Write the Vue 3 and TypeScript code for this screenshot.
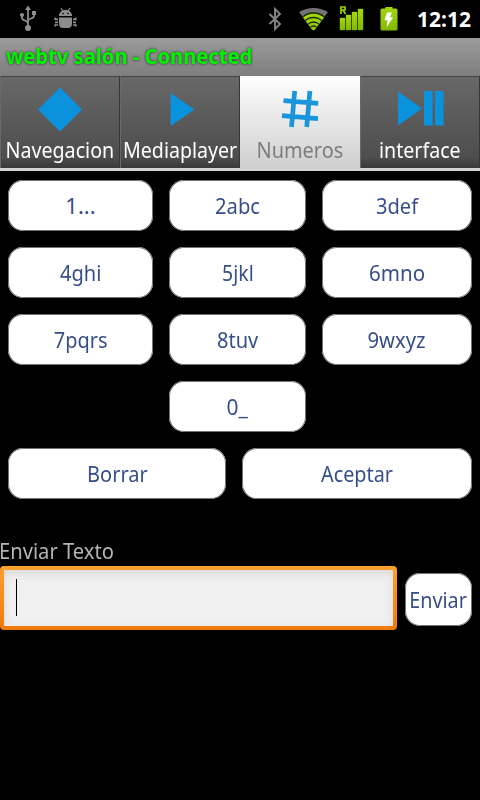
<script setup lang="ts">
interface Label {
  text: string
  width: number
}

interface Tab extends Label {
  icon: 'diamond' | 'play' | 'hash' | 'playpause'
  active?: boolean
}

const tabs: Tab[] = [
  { text: 'Navegacion', width: 109, icon: 'diamond' },
  { text: 'Mediaplayer', width: 114, icon: 'play' },
  { text: 'Numeros', width: 87, icon: 'hash', active: true },
  { text: 'interface', width: 82, icon: 'playpause' },
]

const keys: Label[] = [
  { text: '1...', width: 30 },
  { text: '2abc', width: 45 },
  { text: '3def', width: 42 },
  { text: '4ghi', width: 41 },
  { text: '5jkl', width: 32 },
  { text: '6mno', width: 56 },
  { text: '7pqrs', width: 53.5 },
  { text: '8tuv', width: 41 },
  { text: '9wxyz', width: 58 },
  { text: '0_', width: 21 },
]

// Condenses a label horizontally to the given advance width.
const vFit = {
  mounted(el: HTMLElement, binding: { value: number }) {
    el.style.transform = `scaleX(${binding.value / el.offsetWidth})`
  },
}
</script>

<template>
  <div class="screen">
    <header class="status">
      <svg class="status-icons" width="480" height="38" viewBox="0 0 480 38">
        <defs>
          <linearGradient id="lime" x1="0" y1="0" x2="0" y2="1">
            <stop offset="0" stop-color="#a5d613" />
            <stop offset="1" stop-color="#82b800" />
          </linearGradient>
          <clipPath id="wifi"><path d="M299 12Q313.500 4 328 12L315 29.500q-1.500 1.500-3 0z" /></clipPath>
        </defs>
        <g fill="none" stroke="#8d8d8d" stroke-width="1.800">
          <path d="M28 9V28M28 23.500C28 20 22 21 22 18V15M28 21C28 18 34 19 34 16V13" />
        </g>
        <g fill="#8d8d8d">
          <path d="M28 5.500l3 4.500h-6z" />
          <circle cx="28" cy="28" r="3" />
          <circle cx="22" cy="15" r="2.100" />
          <rect x="32" y="11" width="4" height="4" />
          <path d="M59 16a6.500 6.300 0 0 1 13 0zM59 17.500h13v6q0 4.500-4.500 4.500h-4q-4.500 0-4.500-4.500z" />
        </g>
        <path d="M61 8l2 3M70 8l-2 3" fill="none" stroke="#8d8d8d" stroke-width="1.300" />
        <path d="M55.200 17.500v1.800H58M75.800 17.500v1.800H73M55 22.300h3M76 22.300h-3M55.200 26.500v-1.500H58M75.800 26.500v-1.500H73" fill="none" stroke="#8d8d8d" stroke-width="1.700" />
        <circle cx="63" cy="13.500" r=".8" /><circle cx="68" cy="13.500" r=".8" />
        <path d="M269.500 14L280 24l-5 5V9l5 5-10.500 10" fill="none" stroke="#858585" stroke-width="1.900" />
        <g clip-path="url(#wifi)">
          <path d="M298 5h31v26h-31z" fill="#737373" />
          <circle cx="313.500" cy="30" r="16.500" fill="url(#lime)" />
          <g fill="none" stroke="#183000" stroke-width="1.300">
            <circle cx="313.500" cy="30" r="17" />
            <circle cx="313.500" cy="30" r="12.500" />
            <circle cx="313.500" cy="30" r="8" />
            <circle cx="313.500" cy="30" r="4" />
          </g>
        </g>
        <g class="signal" fill="url(#lime)">
          <rect x="340" y="18" width="5" height="12" />
          <rect x="346" y="15" width="5" height="15" />
          <rect x="352" y="12" width="5" height="18" />
          <rect x="358" y="9" width="5" height="21" />
        </g>
        <path d="M341 14V7h4v3h-4m2 0l2.500 4" fill="none" stroke="#9bd000" stroke-width="1.700" />
        <path d="M382 8.500h3.500V7h7v1.500H396q1.500 0 1.500 1.500v19q0 1.500-1.500 1.500h-14q-1.500 0-1.500-1.500V10q0-1.500 1.500-1.500z" fill="url(#lime)" />
        <path d="M387 12.500h5l-2 4.500 3 .5-6.500 10 1-7-3-.5z" fill="#fff" />
      </svg>
      <span v-fit="54" class="clock">12:12</span>
    </header>

    <div class="titlebar"><span v-fit="246" class="title">webtv salón - Connected</span></div>

    <nav class="tabs">
      <button v-for="tab in tabs" :key="tab.text" class="tab" :class="{ active: tab.active }">
        <svg class="tab-icon" width="60" height="60" viewBox="0 0 60 60">
          <path v-if="tab.icon === 'diamond'" d="M30 11.500L52 33.500 30 55.500 8 33.500z" fill="#0a92dc" />
          <path v-else-if="tab.icon === 'play'" d="M20.500 17L44.500 33.500 20.500 50z" fill="#0a92dc" />
          <path v-else-if="tab.icon === 'hash'" d="M24.700 15L21.500 51M39.900 15L36.700 51M13.500 24.600L48.200 27.300M12 39.700L48 42.600" fill="none" stroke="#1a95dc" stroke-width="4.700" />
          <path v-else d="M8 15.500L32 32.500 8 49.500zM34 15h8.500v34.500H34zM45 15h8.500v34.500H45z" fill="#0a92dc" />
        </svg>
        <span v-fit="tab.width" class="label">{{ tab.text }}</span>
      </button>
    </nav>

    <main>
      <div class="keypad">
        <button v-for="key in keys" :key="key.text" class="key" :class="{ zero: key.text === '0_' }">
          <span v-fit="key.width" class="label">{{ key.text }}</span>
        </button>
      </div>
      <div class="actions">
        <button class="key"><span v-fit="61" class="label">Borrar</span></button>
        <button class="key"><span v-fit="72" class="label">Aceptar</span></button>
      </div>
      <div class="caption"><span v-fit="114.500" class="label">Enviar Texto</span></div>
      <div class="send">
        <div class="field"><div class="inner"><i class="caret"></i></div></div>
        <button class="key submit"><span v-fit="57.500" class="label">Enviar</span></button>
      </div>
    </main>
  </div>
</template>

<style>
body {
  background: #000;
}
</style>

<style scoped>
.screen {
  width: 480px;
  height: 800px;
  overflow: hidden;
  background: #000;
  font-family: "Noto Sans", "Open Sans", sans-serif;
  font-size: 22px;
}
button {
  margin: 0;
  padding: 0;
  border: 0;
  font: inherit;
}
.label,
.title,
.clock {
  display: inline-block;
  flex: none;
  white-space: nowrap;
  line-height: 30px;
}
.status {
  position: relative;
  display: flex;
  height: 38px;
  justify-content: flex-end;
  align-items: center;
  padding-right: 9px;
  box-sizing: border-box;
}
.status-icons {
  position: absolute;
  left: 0;
  top: 0;
}
.signal {
  filter: drop-shadow(0 0 1px #4c7200);
}
.clock {
  color: #fff;
  font-size: 21px;
  font-weight: 700;
  transform-origin: right;
}
.titlebar {
  display: flex;
  height: 38px;
  padding: 3px 6px 5px;
  box-sizing: border-box;
  align-items: center;
  background: linear-gradient(#9b9b9b, #7e7e7e);
}
.title {
  color: #00f400;
  font-size: 21px;
  font-weight: 700;
  transform-origin: left;
  text-shadow: 0 0 3px #222;
}
.tabs {
  display: grid;
  grid-template-columns: repeat(4, 1fr);
  height: 95px;
  box-sizing: border-box;
  background: linear-gradient(#d5d5d5, #d5d5d5) bottom / 100% 3px no-repeat;
}
.tab {
  display: flex;
  flex-direction: column;
  align-items: center;
  height: 92px;
  overflow: hidden;
  background: linear-gradient(#686868, #4e4e4e 88%, #393939);
  color: #fff;
  box-shadow: inset -1px 0 #373737, inset 1px 0 #696969, inset 0 1px #454545;
}
.tab.active {
  height: 93px;
  background: linear-gradient(#fff, #cecece);
  color: #7d7d7d;
  box-shadow: none;
}
.tab-icon {
  flex: none;
}
.tab .label {
  margin-top: -2px;
}
.keypad {
  display: grid;
  grid-template-columns: 145px 137px 150px;
  grid-auto-rows: 51px;
  gap: 16px;
  padding: 9px 8px 16px;
}
.key {
  display: flex;
  align-items: center;
  justify-content: center;
  padding-bottom: 2px;
  border-radius: 15px;
  background: #fff;
  color: #374f88;
  box-shadow: inset 0 0 0 1px #737373;
}
.zero {
  grid-column: 2;
}
.actions {
  display: grid;
  grid-template-columns: 218px 230px;
  grid-auto-rows: 51px;
  gap: 16px;
  padding: 0 8px;
}
.caption {
  height: 31px;
  margin-top: 36px;
  color: #b4b4b4;
}
.caption .label {
  transform-origin: left;
  margin-left: -1px;
}
.send {
  display: flex;
  align-items: flex-start;
  gap: 8px;
}
.field {
  width: 397px;
  height: 64px;
  padding: 4px;
  box-sizing: border-box;
  border-radius: 4px;
  background: linear-gradient(#fba12e, #ef7a0c);
}
.inner {
  height: 56px;
  padding: 9px 12px;
  box-sizing: border-box;
  background: #f0f0f0;
  box-shadow: inset 0 3px 8px #d7d7d7;
}
.caret {
  display: block;
  width: 1px;
  height: 37px;
  background: #000;
}
.submit {
  width: 67px;
  height: 53px;
  margin-top: 7px;
}
</style>
